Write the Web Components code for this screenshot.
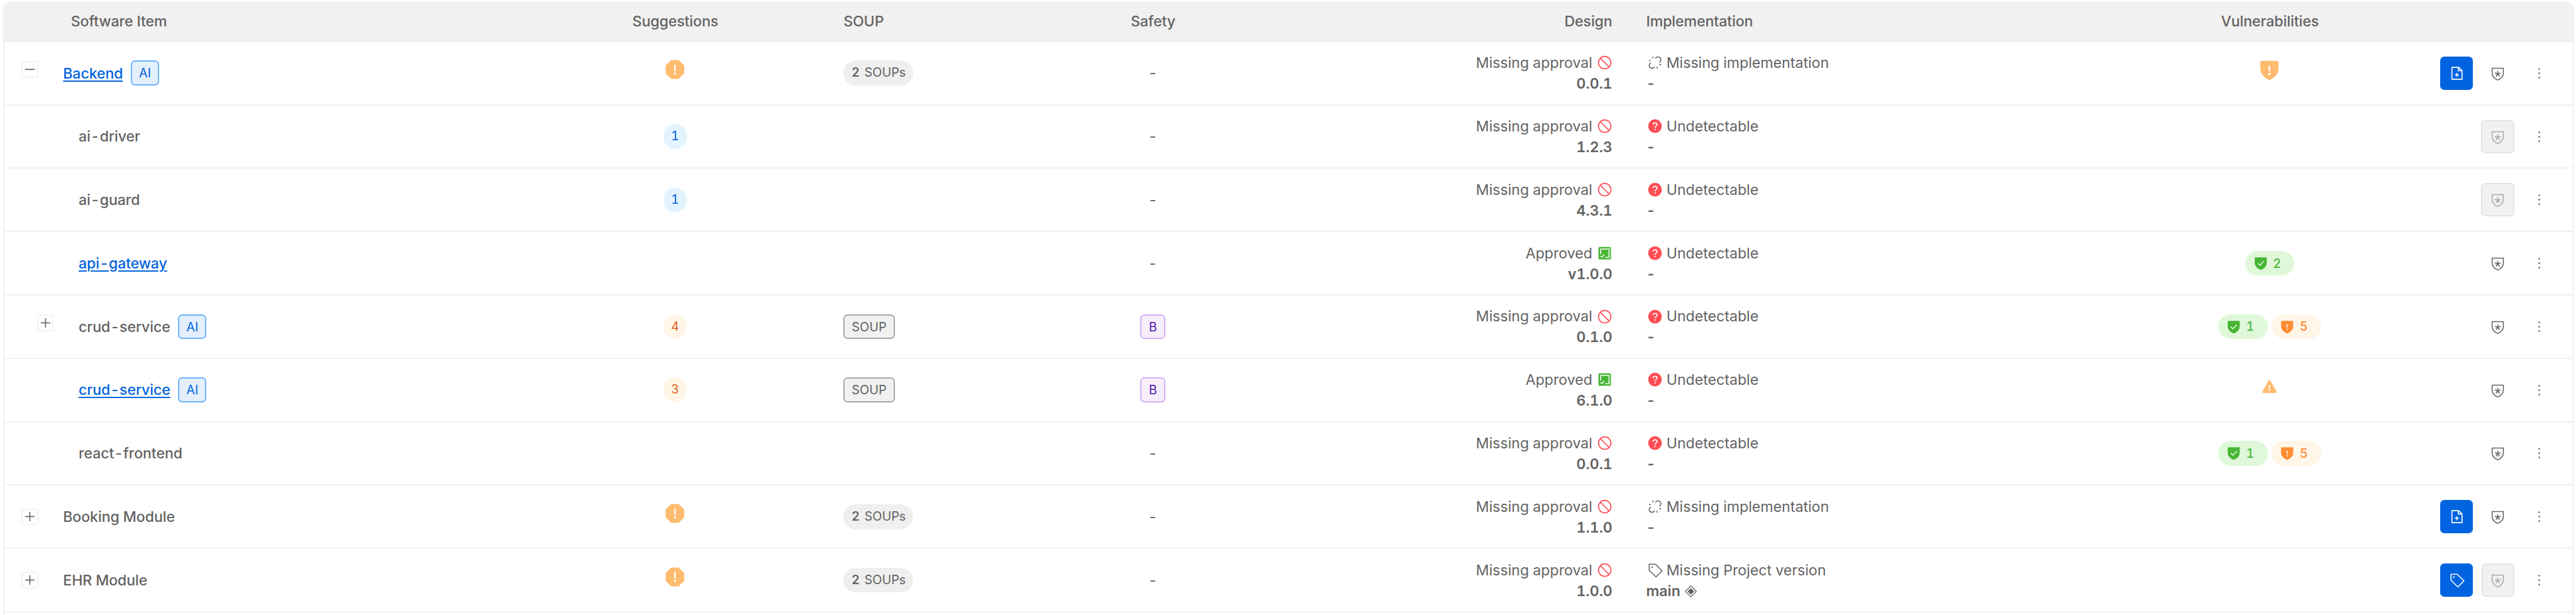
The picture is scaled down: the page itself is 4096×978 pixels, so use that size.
<!DOCTYPE html>
<html lang="en">
<head>
<meta charset="utf-8">
<title>Software items</title>
<style>
  /* 1rem = 100 design units; the table is 4958 units wide */
  html { font-size: calc(100vw / 49.58); }
  body { margin: 0; background: #fff; overflow: hidden; font-family: Inter, "Liberation Sans", sans-serif; color: #636363; }
</style>
</head>
<body>
<item-table></item-table>
<script>
const ICONS = {
  stop: ['#ff4d55', '<circle cx="14" cy="14" r="12" fill="none" stroke="currentColor" stroke-width="2"/><path d="M5.6 5.6L22.4 22.4" stroke="currentColor" stroke-width="2"/>'],
  approved: ['#49b535', '<rect x="2" y="2" width="24" height="24" rx="2" fill="currentColor"/><path d="M6.4 16V6H22.4V22H15" fill="none" stroke="#fff" stroke-width="1.9"/><path d="M6 19.4L8.4 21.8L13 16.8" fill="none" stroke="#fff" stroke-width="1.8"/>'],
  unlink: ['#636363', '<g fill="none" stroke="currentColor" stroke-width="1.9"><path d="M14.6 5.6C17.6 2.2 21.2 2.4 23.6 4.6C26.2 7.2 25.9 10.4 22.2 13.6"/><path d="M5.8 14.4C2.1 17.6 1.8 20.8 4.4 23.4C6.8 25.6 10.4 25.8 13.4 22.4"/><path d="M10 2.3V5.8M2.3 10H5.8M22.2 18H25.7M18 22.2V25.7"/></g>'],
  question: ['#ff4d55', '<circle cx="14" cy="14" r="13" fill="currentColor"/><path d="M9.9 11.2C9.9 8.9 11.6 7.7 14 7.7S18.1 9.1 18.1 11.2C18.1 13.6 14 13.8 14 16.8V17.4" fill="none" stroke="#fff" stroke-width="1.9"/><circle cx="14" cy="20.4" r="1.4" fill="#fff"/>'],
  tag: ['#636363', '<path d="M2.8 2.8H14.9L27.6 15.4L16 27.2L2.8 14.5Z" fill="none" stroke="currentColor" stroke-width="1.9" stroke-linejoin="round"/><circle cx="8.3" cy="8.3" r="1.5" fill="currentColor"/>'],
  diamond: ['#636363', '<path d="M14 3.4L24.6 14L14 24.6L3.4 14Z" fill="none" stroke="currentColor" stroke-width="1.5" stroke-linejoin="round"/><path d="M14 8.2L19.8 14L14 19.8L8.2 14Z" fill="currentColor" stroke="currentColor" stroke-linejoin="round"/>'],
  file: ['#fff', '<g fill="none" stroke="currentColor" stroke-width="2" stroke-linejoin="round"><path d="M4.5 2.5H17.5L24 9V25.5H4.5Z"/><path d="M17 2.5V9H24"/><path d="M14 13.4V20.8M10.3 17.1H17.7"/></g>'],
  star: ['#636363', '<g fill="none" stroke="currentColor" stroke-width="2"><path d="M3.2 4.2H24.8V13.4C24.8 20.4 19.6 24.9 14 26.8C8.4 24.9 3.2 20.4 3.2 13.4Z" stroke-width="1.9" stroke-linejoin="round"/><path d="M14 15.2V9.4M14 15.2L8.5 13.4M14 15.2L19.5 13.4M14 15.2L10.6 19.9M14 15.2L17.4 19.9"/></g>'],
  dots: ['#636363', '<g fill="currentColor"><circle cx="14" cy="5.5" r="1.6"/><circle cx="14" cy="14" r="1.6"/><circle cx="14" cy="22.5" r="1.6"/></g>'],
  ok: ['#49b535', '<path d="M3 1.5H25Q26.5 1.5 26.5 3V13C26.5 20.6 20.6 25.2 14 27.6C7.4 25.2 1.5 20.6 1.5 13V3Q1.5 1.5 3 1.5Z" fill="currentColor"/><path d="M8 13.6L12.4 18L20.4 9.8" fill="none" stroke="#dff8da" stroke-width="2"/>'],
  warn: ['#ff8c33', '<path d="M3 1.5H25Q26.5 1.5 26.5 3V13C26.5 20.6 20.6 25.2 14 27.6C7.4 25.2 1.5 20.6 1.5 13V3Q1.5 1.5 3 1.5Z" fill="currentColor"/><path d="M14 8.4V15.4" stroke="#fff6e8" stroke-width="2.2"/><circle cx="14" cy="19" r="1.5" fill="#fff6e8"/>'],
  bigwarn: ['#ffbb6e', '<path d="M3.1 3.4H24.9Q26.3 3.4 26.3 4.8V13.5C26.3 21.5 20.6 26 14 29.4C7.4 26 1.7 21.5 1.7 13.5V4.8Q1.7 3.4 3.1 3.4Z" transform="translate(0 -1)" fill="currentColor"/><path d="M14 9.8V15.6" stroke="#fff" stroke-width="2.1" stroke-linecap="round"/><circle cx="14" cy="20.2" r="1.7" fill="#fff"/>'],
  octagon: ['#ffbb6e', '<path d="M10 1.2H18Q18.8 1.2 19.4 1.8L25.9 8Q26.5 8.6 26.5 9.4V18.6Q26.5 19.4 25.9 20L19.4 26.2Q18.8 26.8 18 26.8H10Q9.2 26.8 8.6 26.2L2.1 20Q1.5 19.4 1.5 18.6V9.4Q1.5 8.6 2.1 8L8.6 1.8Q9.2 1.2 10 1.2Z" fill="currentColor"/><path d="M14 8V15.4" stroke="#fff" stroke-width="2" stroke-linecap="round"/><circle cx="14" cy="19.4" r="1.5" fill="#fff"/>'],
  triangle: ['#ffbb6e', '<path d="M12.3 2.8Q14 .3 15.7 2.8L27.5 23.5Q28.4 26.5 25.5 26.5H2.5Q-.4 26.5 .5 23.5Z" fill="currentColor"/><path d="M14 10.9V17.5" stroke="#fff" stroke-width="2.4"/><circle cx="14" cy="20.9" r="1.6" fill="#fff"/>']
};

function define(name, css, html) {
  const template = document.createElement('template');
  template.innerHTML = `<style>${css}</style>${html}`;
  customElements.define(name, class extends HTMLElement {
    constructor() {
      super();
      this.attachShadow({ mode: 'open' }).append(template.content.cloneNode(true));
    }
  });
}

class UiIcon extends HTMLElement {
  connectedCallback() {
    if (this.shadowRoot) return;
    const [color, art] = ICONS[this.getAttribute('name')];
    this.attachShadow({ mode: 'open' }).innerHTML = `<style>
      :host { display: block; flex: none; width: .28rem; height: .28rem; color: var(--icon-color, ${color}); }
      svg { display: block; width: 100%; height: 100%; overflow: visible; }
    </style><svg viewBox="0 0 28 28">${art}</svg>`;
  }
}
customElements.define('ui-icon', UiIcon);

define('ui-tag', `
  :host { display: block; box-sizing: border-box; height: .48rem; padding: 0 .135rem; font-size: .24rem; line-height: .44rem; letter-spacing: 0;
    border: 2px solid #69b5ff; border-radius: .08rem; background: #e3effb; color: #0064e0; white-space: nowrap; }
  :host([tone=gray]) { border-color: #a8a8a8; background: #f1f1f1; color: #636363; }
  :host([tone=purple]) { border-color: #d3adf7; background: #f8effd; color: #531dab; }
`, '<slot></slot>');

define('count-pill', `
  :host { display: flex; align-items: center; box-sizing: border-box; height: .48rem; padding: 0 .14rem 0 .155rem; gap: .095rem;
    font-size: .24rem; line-height: .48rem; border-radius: .24rem; background: #efefef; white-space: nowrap; }
  ::slotted(b) { font-weight: 600; }
`, '<slot></slot>');

define('count-dot', `
  :host { display: block; width: .44rem; height: .48rem; border-radius: .24rem; font-size: .24rem; line-height: .48rem; text-align: center;
    background: #e4f4ff; color: #0a5fdc; }
  :host([tone=orange]) { background: #fff6e8; color: #dd6522; }
`, '<slot></slot>');

define('vuln-pill', `
  :host { display: flex; align-items: center; box-sizing: border-box; width: .952rem; height: .48rem; padding-left: .18rem; gap: .12rem;
    border-radius: .24rem; font-size: .24rem; font-weight: 500; background: #dff8da; color: #49b535; }
  :host([tone=orange]) { background: #fff6e8; color: #ff8c33; }
  ::slotted(ui-icon) { width: .26rem; height: .26rem; margin: 0 -.01rem; }
`, '<slot></slot>');

define('icon-button', `
  :host { display: flex; align-items: center; justify-content: center; box-sizing: border-box; width: .64rem; height: .64rem;
    border: 2px solid transparent; border-radius: .08rem; }
  :host([kind=primary]) { background: #0064e0; border-color: #0064e0; --icon-color: #fff; }
  :host([kind=disabled]) { background: #f1f1f1; border-color: #e3e3e3; --icon-color: #a9a9a9; }
`, '<slot></slot>');

define('expand-toggle', `
  :host { display: grid; place-items: center; box-sizing: border-box; width: .32rem; height: .32rem; border: 2px solid #f2f2f2; border-radius: .06rem; background: #fff; }
  svg { display: block; width: .18rem; height: .18rem; grid-area: 1 / 1; }
  :host([open]) .v { display: none; }
`, '<svg viewBox="0 0 18 18" stroke="#636363" stroke-width="2"><path d="M0 9H18"/><path class="v" d="M9 0V18"/></svg>');

define('status-pair', `
  :host { display: flex; flex-direction: column; padding-top: .025rem; font-size: .28rem; line-height: .4rem; white-space: nowrap; }
  div { display: flex; align-items: center; height: .4rem; gap: .08rem; }
  .version { font-weight: 600; gap: .06rem; }
  ::slotted(ui-icon) { position: relative; top: -.01rem; }
  :host([end]) div { justify-content: flex-end; gap: .095rem; }
  :host([end]) ::slotted(ui-icon) { margin-right: .012rem; }
  :host([end]) { align-items: flex-end; padding-right: .01rem; }
`, '<div><slot></slot></div><div class="version"><slot name="version"></slot></div>');

define('item-name', `
  :host { display: flex; align-items: center; gap: .15rem; font-size: .28rem; font-weight: 500; letter-spacing: -.0012rem; line-height: .44rem; white-space: nowrap; }
  ::slotted(a) { color: #0064e0; text-decoration: underline; text-decoration-thickness: .02rem; text-underline-offset: .035rem; }
  ::slotted(a), ::slotted(span) { padding-top: .01rem; }
  ::slotted(ui-tag) { font-weight: 400; }
`, '<slot></slot>');

define('table-row', `
  :host { display: grid; grid-template-columns: 9.99rem 5.84rem 3.35rem 5.85rem 6.25rem 9.36rem 5.92rem 2.88rem;
    box-sizing: border-box; height: 1.22rem; align-items: center; border-bottom: 2px solid #f1f1f1; }
  :host([head]) { height: .78rem; padding-bottom: .01rem; background: #f1f1f1; border: 0; border-radius: .08rem .08rem 0 0; font-weight: 500; letter-spacing: -.0012rem; }
`, '<slot></slot>');

define('table-cell', `
  :host { display: flex; align-items: center; gap: .08rem; box-sizing: border-box; padding: 0 .32rem; min-width: 0; font-size: .28rem; }
  :host([center]) { justify-content: center; padding: 0; }
  :host([right]) { justify-content: flex-end; }
  :host([actions]) { justify-content: flex-end; gap: .16rem; padding-right: .33rem; }
  :host([rule]) { height: .44rem; border-right: 1px solid #efefef; }
  :host([rule][center]) { padding-left: .02rem; }
  :host([raised]) { padding-bottom: .13rem; }
`, '<slot></slot>');

/* The name column: an optional toggle in a fixed gutter, then the label */
define('name-cell', `
  :host { display: flex; align-items: center; padding-left: .33rem; }
  :host([nested]) { padding-left: .63rem; }
  .gutter { width: .8rem; display: flex; }
  :host([tagged]) .gutter { padding-bottom: .14rem; }
`, '<div class="gutter"><slot name="toggle"></slot></div><slot></slot>');

const ROWS = [
  { name: 'Backend', link: 1, ai: 1, toggle: 'open', sug: '!', soup: 2, ver: '0.0.1', impl: 'link', vuln: 'shield', act: 'file' },
  { name: 'ai-driver', nested: 1, sug: 1, ver: '1.2.3', off: 1 },
  { name: 'ai-guard', nested: 1, sug: 1, ver: '4.3.1', off: 1 },
  { name: 'api-gateway', link: 1, nested: 1, ok: 1, ver: 'v1.0.0', vuln: [2] },
  { name: 'crud-service', nested: 1, ai: 1, toggle: 'closed', sug: 4, soup: 'tag', safety: 'B', ver: '0.1.0', vuln: [1, 5] },
  { name: 'crud-service', link: 1, nested: 1, ai: 1, sug: 3, soup: 'tag', safety: 'B', ok: 1, ver: '6.1.0', vuln: 'triangle' },
  { name: 'react-frontend', nested: 1, ver: '0.0.1', vuln: [1, 5] },
  { name: 'Booking Module', toggle: 'closed', sug: '!', soup: 2, ver: '1.1.0', impl: 'link', act: 'file' },
  { name: 'EHR Module', toggle: 'closed', sug: '!', soup: 2, ver: '1.0.0', impl: 'tag', act: 'tag', off: 1 }
];

const icon = (name, style = '') => `<ui-icon name="${name}" style="${style}"></ui-icon>`;

function suggestion(r) {
  if (r.sug === '!') return `<table-cell center raised>${icon('octagon', 'width:.44rem;height:.4rem')}</table-cell>`;
  return `<table-cell center>${r.sug ? `<count-dot ${r.sug > 1 ? 'tone="orange"' : ''}>${r.sug}</count-dot>` : ''}</table-cell>`;
}
function soup(r) {
  if (r.soup === 'tag') return '<ui-tag tone="gray">SOUP</ui-tag>';
  return r.soup ? `<count-pill><b>${r.soup}</b><span>SOUPs</span></count-pill>` : '';
}
function implementation(r) {
  const kinds = { link: ['unlink', 'Missing implementation', '-'], tag: ['tag', 'Missing Project version', 'main'] };
  const [ic, text, version] = kinds[r.impl] || ['question', 'Undetectable', '-'];
  const mark = r.impl === 'tag' ? `<span slot="version">${icon('diamond')}</span>` : '';
  return `<status-pair>${icon(ic, 'margin-left:.03rem')}<span>${text}</span><span slot="version">${version}</span>${mark}</status-pair>`;
}
function vulnerabilities(r) {
  if (r.vuln === 'shield') return `<table-cell center raised>${icon('bigwarn', 'width:.4rem;height:.4rem')}</table-cell>`;
  if (r.vuln === 'triangle') return `<table-cell center raised>${icon('triangle')}</table-cell>`;
  const [ok, warn] = r.vuln || [];
  return `<table-cell center>${ok ? `<vuln-pill>${icon('ok')}<span>${ok}</span></vuln-pill>` : ''}${warn ? `<vuln-pill tone="orange">${icon('warn')}<span>${warn}</span></vuln-pill>` : ''}</table-cell>`;
}
function row(r) {
  return `<table-row>
    <name-cell ${r.nested ? 'nested' : ''} ${r.ai ? 'tagged' : ''}>${r.toggle ? `<expand-toggle slot="toggle" ${r.toggle === 'open' ? 'open' : ''}></expand-toggle>` : ''}
      <item-name>${r.link ? `<a>${r.name}</a>` : `<span>${r.name}</span>`}${r.ai ? '<ui-tag>AI</ui-tag>' : ''}</item-name></name-cell>
    ${suggestion(r)}
    <table-cell>${soup(r)}</table-cell>
    <table-cell center>${r.safety ? `<ui-tag tone="purple">${r.safety}</ui-tag>` : '<span>-</span>'}</table-cell>
    <table-cell right><status-pair end><span>${r.ok ? 'Approved' : 'Missing approval'}</span>${icon(r.ok ? 'approved' : 'stop')}<span slot="version">${r.ver}</span></status-pair></table-cell>
    <table-cell>${implementation(r)}</table-cell>
    ${vulnerabilities(r)}
    <table-cell actions>${r.act ? `<icon-button kind="primary">${icon(r.act)}</icon-button>` : ''}<icon-button ${r.off ? 'kind="disabled"' : ''}>${icon('star')}</icon-button><icon-button>${icon('dots')}</icon-button></table-cell>
  </table-row>`;
}

customElements.define('item-table', class extends HTMLElement {
  connectedCallback() {
    this.attachShadow({ mode: 'open' }).innerHTML = `<style>
      :host { display: block; box-sizing: border-box; height: 100vh; padding: .03rem .04rem 0 .06rem; font-variant-numeric: tabular-nums; }
      .frame { box-sizing: border-box; height: 100%; border: solid #f1f1f1; border-width: 0 2px; border-radius: .16rem .16rem 0 0; overflow: hidden; }
      .title { padding-left: 1.28rem; }
    </style>
    <div class="frame">
      <table-row head>
        <table-cell rule class="title">Software Item</table-cell>
        <table-cell rule center>Suggestions</table-cell>
        <table-cell rule>SOUP</table-cell>
        <table-cell rule center>Safety</table-cell>
        <table-cell rule right>Design</table-cell>
        <table-cell rule>Implementation</table-cell>
        <table-cell rule center>Vulnerabilities</table-cell>
        <table-cell></table-cell>
      </table-row>
      ${ROWS.map(row).join('')}
    </div>`;
  }
});
</script>
</body>
</html>
